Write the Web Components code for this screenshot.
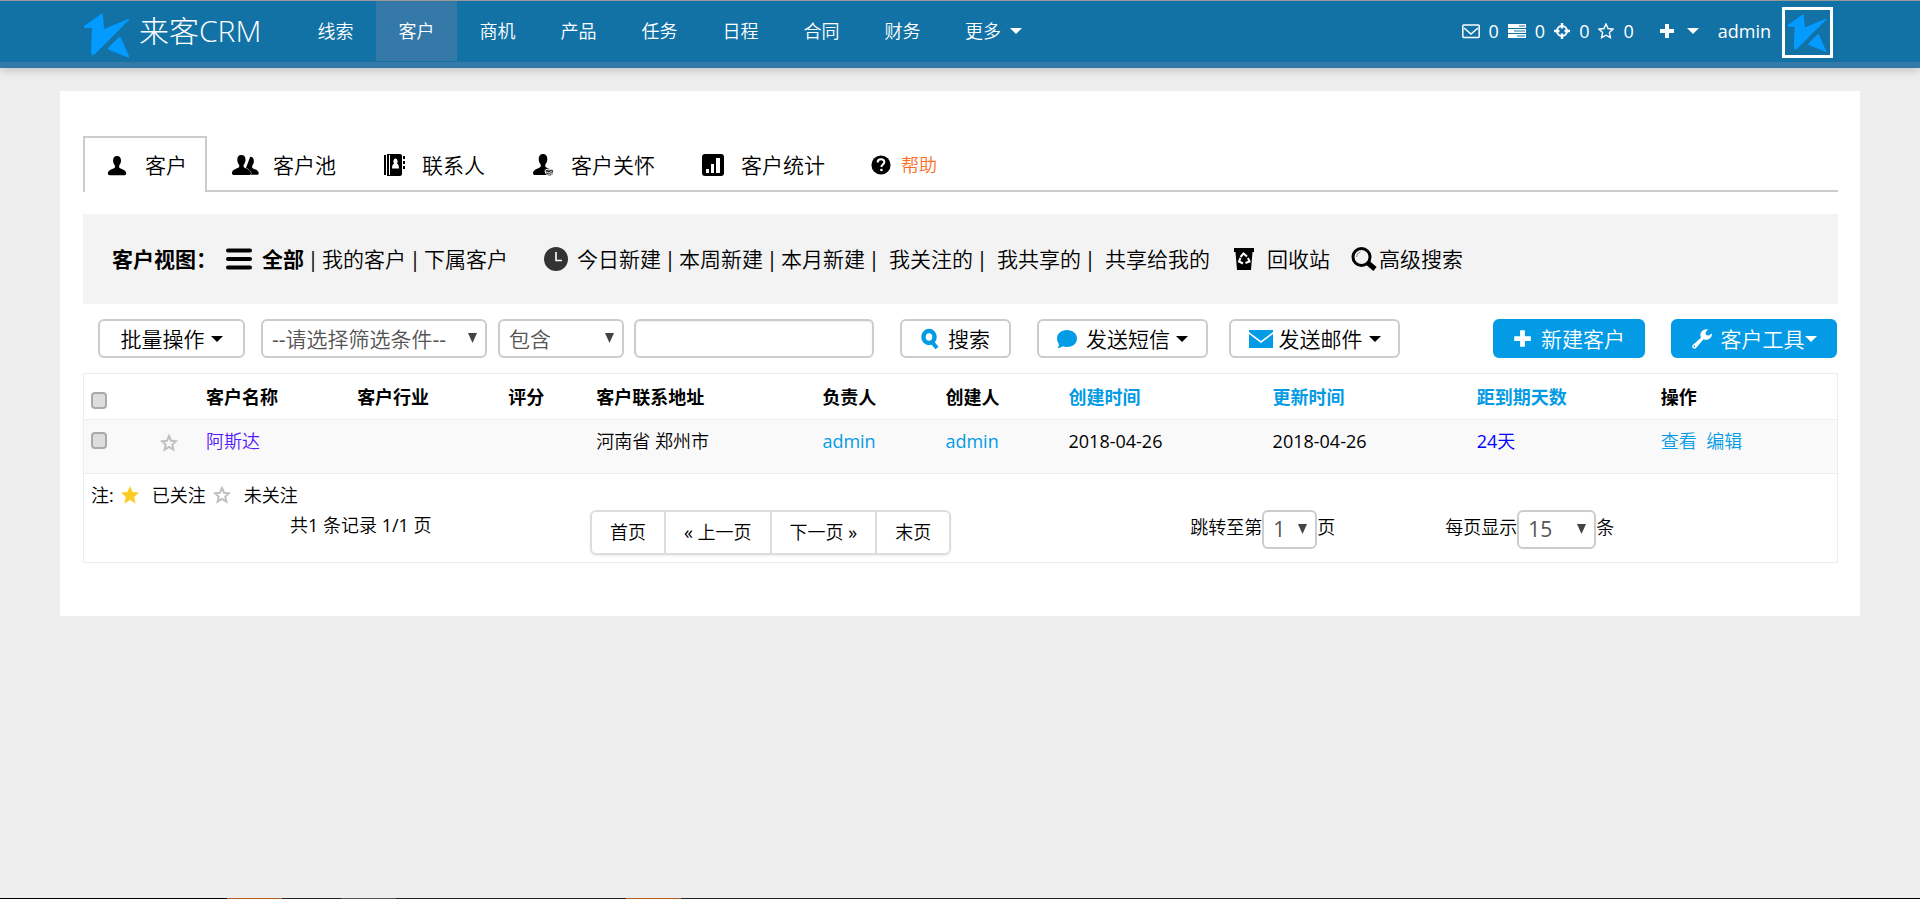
<!DOCTYPE html>
<html lang="zh-CN">
<head>
<meta charset="utf-8">
<title>来客CRM - 客户</title>
<style>
html { --strong-font: "Open Sans", "Noto Sans CJK SC", sans-serif; font-family: "Open Sans", "Noto Sans CJK SC DemiLight", "Noto Sans CJK SC", sans-serif; font-size: 18px; line-height: 24px; color: #000; background: #eee; }
body { margin: 0; }
</style>
</head>
<body>
<crm-app></crm-app>
<script>
const define = (name, html, setup) => {
  const template = document.createElement('template');
  template.innerHTML = '<style>*{box-sizing:border-box}a{color:inherit;text-decoration:none}button,input,select{font:inherit;color:inherit;margin:0}</style>' + html;
  customElements.define(name, class extends HTMLElement {
    constructor() {
      super();
      this.attachShadow({ mode: 'open' }).append(template.content.cloneNode(true));
    }
    connectedCallback() { if (setup) setup(this, this.shadowRoot); }
  });
};

const person = '<path d="M12 1c3 0 4.300 2 4.300 5 0 2.500-.9 4.300-2 5.500v2.200c1 1.600 7.700 2.300 7.700 6.500 0 1.200-.8 1.800-2 1.800H4c-1.200 0-2-.6-2-1.800 0-4.200 6.700-4.900 7.700-6.500v-2.200c-1.100-1.200-2-3-2-5.500 0-3 1.300-5 4.300-5z"/>';
const mark = '<path fill="#039bff" d="M1 13 18 1q2-1 2 1l1 14L45 6q3-1 1 1L12 41q-4 3-4-2L9 15H2q-2-1-1-2zM35 25q2-2 3 0l8 18q1 3-2 1L26 37q-2-1-1-2z"/>';
const ICONS = {
  logo: ['0 0 48 46', mark],
  caret: ['0 0 12 6', '<path d="M0 0h12L6 6z"/>'],
  mail: ['0 0 18 16', '<rect x=".8" y="2" width="16.400" height="12.500" rx="1" fill="none" stroke="currentColor" stroke-width="1.500"/><path d="m2 5 7 6 7-6" fill="none" stroke="currentColor" stroke-width="1.500"/>'],
  tasks: ['0 0 18 16', '<path fill-rule="evenodd" d="M0 1h18v4H0zm11 1.500v1h6v-1zM0 6h18v4H0zm6 1.500v1h11v-1zM0 11h18v4H0zm9 1.500v1h8v-1z"/>'],
  target: ['0 0 16 16', '<circle cx="8" cy="8" r="5" fill="none" stroke="currentColor" stroke-width="2"/><path d="M6.800 0h2.400v5.500H6.800zM6.800 10.500h2.400V16H6.800zM0 6.800h5.500v2.400H0zM10.500 6.800H16v2.400h-5.500z"/>'],
  starline: ['0 0 16 16', '<path d="m8 1 2.100 4.500 5 .7-3.700 3.400 1 5L8 12.200l-4.400 2.400 1-5L.9 6.200l5-.7z" fill="none" stroke="currentColor" stroke-width="1.400"/>'],
  plus: ['0 0 16 16', '<path d="M6 1h4v5h5v4h-5v5H6v-5H1V6h5z"/>'],
  user: ['0 0 24 24', '<g transform="translate(1 2) scale(.92)">' + person + '</g>'],
  users: ['0 0 28 24', '<path transform="translate(9 3) scale(.85)" d="M12 1c3 0 4.300 2 4.300 5 0 2.500-.9 4.300-2 5.500v2.200c1 1.600 7.700 2.300 7.700 6.500 0 1.200-.8 1.800-2 1.800H4z"/><g stroke="#fff" stroke-width="1" paint-order="stroke" transform="translate(-1 1) scale(.95)">' + person + '</g>'],
  book: ['0 0 24 24', '<path fill-rule="evenodd" d="M2 2h2v20H2zM5 1h13q2 0 2 2v18q0 2-2 2H5zm2 1v20h1V2zm6.500 3.500a2.500 3 0 0 0-1.500 5q-2 1-2 5h7q0-4-2-5a2.500 3 0 0 0-1.500-5zM21 3h2v3h-2zM21 8h2v3h-2zM21 13h2v3h-2z"/>'],
  care: ['0 0 24 24', person + '<path d="M14 17.500q2-2.500 4-.5 2-2 4.500 0 1 3-3 6h-2q-4-3-3.500-5.500z" fill="#333" stroke="#fff"/><path d="m15 19 3 1 3-2M17 22l4-2" fill="none" stroke="#fff" stroke-width=".8"/>'],
  chart: ['0 0 24 24', '<rect x="1" y="1" width="22" height="22" rx="3"/><path fill="#fff" d="M5 16h3v4H5zM10 11h3v9h-3zM15 5h4v15h-4z"/>'],
  help: ['0 0 24 24', '<circle cx="12" cy="12" r="11.500"/><path d="M8 9q0-4 4-4t4 3.500c0 3-3.500 3-3.500 6" fill="none" stroke="#fff" stroke-width="2.400"/><circle cx="12.500" cy="18" r="1.600" fill="#fff"/>'],
  menu: ['0 0 26 22', '<path d="M2 2.500h22M2 11h22M2 19.500h22" stroke="currentColor" stroke-width="4" stroke-linecap="round"/>'],
  clock: ['0 0 24 24', '<circle cx="12" cy="12" r="12" fill="#333"/><path d="M12 5v8.500h6" fill="none" stroke="#fff" stroke-width="1.600"/>'],
  trash: ['0 0 20 24', '<path d="M0 1h20v4h-1.500L17 23H3L1.500 5H0z"/><path d="m6.500 10 3-3.500 3.500 3M14 11l1.500 3.500-4 1.500M9 16.500l-4-2 1.500-3.500" fill="none" stroke="#fff" stroke-width="2"/>'],
  search: ['0 0 26 24', '<circle cx="10.500" cy="10" r="8.500" fill="none" stroke="currentColor" stroke-width="3"/><path d="m17 16 7 6" stroke="currentColor" stroke-width="5"/><path d="M5.500 10q0-4 4-5" fill="none" stroke="#888"/>'],
  find: ['0 0 18 22', '<ellipse cx="8" cy="9" rx="5.500" ry="6" fill="none" stroke="#039be5" stroke-width="4.500"/><path d="m11 14 5 6" stroke="#039be5" stroke-width="4"/>'],
  bubble: ['0 0 20 20', '<path fill="#039be5" d="M10 1c5.500 0 10 3.500 10 8.500S15.500 18 10 18c-1.500 0-3-.3-4-.8Q4 19 .5 19q2-2 1.300-4Q0 12.500 0 9.500C0 4.500 4.500 1 10 1z"/>'],
  envelope: ['0 0 24 20', '<path fill="#039be5" d="M0 1h24v2L12 12 0 3zM0 5l12 9 12-9v14H0z"/>'],
  wrench: ['0 0 20 20', '<path fill-rule="evenodd" d="M20 4.500a6 6 0 0 1-8.500 5.800L4 19q-1.500 1.500-3.200 0-1.400-1.700.2-3.200l8-7A6 6 0 0 1 16 .4l-2.500 3 .5 2.600 2.600.4zM3 16.500a.9.9 0 1 0 0 1.600z"/>'],
  star: ['0 0 18 18', '<path fill="none" stroke="#c0c0c0" stroke-width="2" d="m9 2 2.100 4.700 5 .5-3.800 3.400 1.100 5L9 13l-4.400 2.600 1.100-5L2 7.200l5-.5z"/>'],
  gold: ['0 0 18 18', '<path fill="#fdcb24" d="m9 0 2.600 6 6.400.6-4.800 4.300 1.400 6.500L9 14.100l-5.600 3.300 1.400-6.500L0 6.600 6.400 6z"/>'],
};

define('crm-icon', '<style>:host{display:inline-flex;flex:none}svg{display:block;fill:currentColor}</style><svg aria-hidden="true"></svg>', (host, root) => {
  const [box, shapes] = ICONS[host.getAttribute('name')];
  const [, , w, h] = box.split(' ');
  const svg = root.querySelector('svg');
  const scale = (host.getAttribute('size') || h) / h;
  svg.setAttribute('viewBox', box);
  svg.setAttribute('width', w * scale);
  svg.setAttribute('height', h * scale);
  svg.innerHTML = shapes;
});

define('nav-item', `
<style>
:host{display:block}
a{display:flex;align-items:center;justify-content:center;gap:9px;height:60px;min-width:81px;padding:0 22px;color:#fff;white-space:nowrap}
:host([active]) a{background:#3479a8}
</style>
<a href="#"><slot></slot></a>`);

define('crm-navbar', `
<style>
:host{display:block;background:#1272a5;border-top:1px solid #999;border-bottom:6px solid #3479a8;box-shadow:0 2px 10px rgba(0,0,0,.2);color:#fff}
.bar{display:flex;height:61px;padding:0 87px 0 83px}
.brand{display:flex;gap:8px;padding-top:12px;font-family:var(--strong-font);font-size:30px;font-weight:300;line-height:36px;width:212px;white-space:nowrap}
nav{display:flex;flex:1}
.status{display:flex;align-items:center;height:60px;gap:9px}
.status a{display:flex;align-items:center;gap:9px}
.add{margin-left:16px}
.status .add{gap:12px}
.me{margin-left:10px}
.avatar{display:block;width:51px;height:51px;border:3px solid #fff;margin:6px 0 0 11px;padding:4px 0 0 2px}
</style>
<div class="bar">
 <a class="brand" href="#"><crm-icon name="logo"></crm-icon>来客CRM</a>
 <nav>
  <nav-item>线索</nav-item><nav-item active>客户</nav-item><nav-item>商机</nav-item><nav-item>产品</nav-item><nav-item>任务</nav-item><nav-item>日程</nav-item><nav-item>合同</nav-item><nav-item>财务</nav-item><nav-item>更多<crm-icon name="caret"></crm-icon></nav-item>
 </nav>
 <div class="status">
  <a href="#"><crm-icon name="mail"></crm-icon>0</a>
  <a href="#"><crm-icon name="tasks"></crm-icon>0</a>
  <a href="#"><crm-icon name="target"></crm-icon>0</a>
  <a href="#"><crm-icon name="starline"></crm-icon>0</a>
  <a class="add" href="#" aria-label="新建"><crm-icon name="plus"></crm-icon><crm-icon name="caret"></crm-icon></a>
  <a class="me" href="#">admin</a>
 </div>
 <a class="avatar" href="#" aria-label="admin"><crm-icon name="logo" size="39"></crm-icon></a>
</div>`);

define('crm-tab', `
<style>
:host{display:block}
a{display:flex;align-items:center;height:56px;padding:0 18px;border:2px solid transparent;border-bottom:0;font-size:21px;white-space:nowrap}
.icon{display:flex;justify-content:center;width:28px;margin-right:14px}
:host([active]) a{border-color:#ccc;background:#fff}
:host([help]) a{font-size:18px;color:#ff6c1e}
:host([help]) .icon{width:24px;margin-right:8px;color:#000}
</style>
<a href="#"><span class="icon"><slot name="icon"></slot></span><slot></slot></a>`);

define('crm-tabs', `
<style>
:host{display:flex;gap:4px;background:linear-gradient(#ccc,#ccc) 0 100%/100% 2px no-repeat}
</style><slot></slot>`);

define('filter-bar', `
<style>
:host{display:flex;flex-wrap:wrap;align-items:center;min-height:90px;padding:0 29px;background:#f3f3f3;font-size:21px;white-space:nowrap}
a,strong{display:flex;align-items:center}
strong,.on{font-family:var(--strong-font);font-weight:700}
.group{display:flex;gap:6px;margin-right:36px}
.group i{display:flex;justify-content:center;font-style:normal;width:6px}
.wide{margin-left:6px}
crm-icon{margin-right:9px}
strong{margin-right:9px}
.list{margin-right:10px}
.last{margin-right:24px}
.trash{margin-right:13px}
.find{margin:0 2px 0 21px}
</style>
<strong>客户视图：</strong>
<crm-icon class="list" name="menu"></crm-icon>
<div class="group"><a class="on" href="#">全部</a><i>|</i><a href="#">我的客户</a><i>|</i><a href="#">下属客户</a></div>
<crm-icon name="clock"></crm-icon>
<div class="group last"><a href="#">今日新建</a><i>|</i><a href="#">本周新建</a><i>|</i><a href="#">本月新建</a><i>|</i><a class="wide" href="#">我关注的</a><i>|</i><a class="wide" href="#">我共享的</a><i>|</i><a class="wide" href="#">共享给我的</a></div>
<crm-icon class="trash" name="trash"></crm-icon><a href="#">回收站</a>
<crm-icon class="find" name="search"></crm-icon><a href="#">高级搜索</a>`);

define('crm-button', `
<style>
:host{display:block}
button{display:flex;align-items:center;justify-content:center;gap:6px;width:100%;height:39px;padding:0 8px;border:2px solid #ccc;border-radius:6px;background:#fff;font-size:21px;white-space:nowrap}
:host([primary]) button{background:#039be5;border-color:#039be5;color:#fff}
</style>
<button type="button"><slot></slot></button>`);

define('crm-select', `
<style>
:host{display:block;position:relative}
select{display:block;width:100%;height:39px;padding:0 9px;border:2px solid #ccc;border-radius:6px;background:#fff;appearance:none;font-size:21px;color:#555}
svg{position:absolute;right:10px;top:14px;fill:#444;pointer-events:none}
</style>
<select></select><svg width="9" height="10" viewBox="0 0 9 10" aria-hidden="true"><path d="M0 0h9L4.500 10z"/></svg>`, (host, root) => {
  const select = root.querySelector('select');
  select.setAttribute('aria-label', host.getAttribute('label'));
  select.add(new Option(host.getAttribute('value')));
});

define('tool-bar', `
<style>
:host{display:flex;flex-wrap:wrap;align-items:center;padding:15px 1px 15px 15px;white-space:nowrap}
.batch{width:147px;margin-right:16px}
.field{width:226px;margin-right:11px}
.match{width:126px;margin-right:10px}
input{width:240px;height:39px;margin-right:26px;padding:0 9px;border:2px solid #ccc;border-radius:6px;background:#fff;box-shadow:inset 0 1px 2px #eee;font-size:21px}
.find{width:111px;margin-right:26px}
.sms{width:171px;margin-right:21px}
.mail{width:171px}
.new{width:152px;margin:0 26px 0 auto}
.tools{width:166px}
.roomy{margin-right:3px}
.tight{margin-left:-6px}
</style>
<crm-button class="batch">批量操作<crm-icon name="caret"></crm-icon></crm-button>
<crm-select class="field" label="筛选条件" value="--请选择筛选条件--"></crm-select>
<crm-select class="match" label="匹配方式" value="包含"></crm-select>
<input type="text" aria-label="搜索内容">
<crm-button class="find"><crm-icon class="roomy" name="find"></crm-icon>搜索</crm-button>
<crm-button class="sms"><crm-icon class="roomy" name="bubble"></crm-icon>发送短信<crm-icon name="caret"></crm-icon></crm-button>
<crm-button class="mail"><crm-icon name="envelope"></crm-icon>发送邮件<crm-icon name="caret"></crm-icon></crm-button>
<crm-button class="new" primary><crm-icon class="roomy" name="plus" size="19"></crm-icon>新建客户</crm-button>
<crm-button class="tools" primary><crm-icon class="roomy" name="wrench"></crm-icon>客户工具<crm-icon class="tight" name="caret"></crm-icon></crm-button>`);

define('crm-pager', `
<style>
:host{display:flex;border:2px solid #ddd;border-radius:6px;box-shadow:0 1px 2px rgba(0,0,0,.08);white-space:nowrap}
a{display:block;padding:0 18px;line-height:41px}
a+a{border-left:2px solid #ddd}
</style>
<a href="#">首页</a><a href="#">« 上一页</a><a href="#">下一页 »</a><a href="#">末页</a>`);

define('customer-table', `
<style>
:host{display:block;border:1px solid #e8efef}
table{width:100%;border-collapse:collapse;table-layout:fixed}
th,td{padding:11px 7px 0;text-align:left;vertical-align:top;line-height:24px;white-space:nowrap}
th{height:45px;font-family:var(--strong-font);font-weight:700}
td{height:54px;padding-top:9px;background:#f9f9f9;border:solid #e8efef;border-width:1px 0}
input{display:block;appearance:none;width:16px;height:17px;margin-top:7px;border:2px solid #aaa;border-radius:4px;background:#ddd}
td input{margin-top:3px}
td crm-icon{display:block;margin-top:5px}
.blue{color:#039be5}
.visited{color:#551aff}
.days{color:#00f}
.notes{display:flex;align-items:center;gap:13px;padding:9px 7px 0}
.notes crm-icon{margin-left:-6px}
.foot{display:flex;align-items:flex-start;padding:3px 0 7px 206px;white-space:nowrap}
.count{width:300px;padding-top:3px}
.jump{display:flex;line-height:34px}
.to{margin-left:239px}
.per{margin-left:110px}
.page{width:55px}
.size{width:79px}
</style>
<table>
 <colgroup><col style="width:69px"><col style="width:46px"><col style="width:151px"><col style="width:151px"><col style="width:88px"><col style="width:226px"><col style="width:123px"><col style="width:123px"><col style="width:204px"><col style="width:204px"><col style="width:184px"><col style="width:183px"></colgroup>
 <thead><tr><th><input type="checkbox" aria-label="全选"></th><th></th><th>客户名称</th><th>客户行业</th><th>评分</th><th>客户联系地址</th><th>负责人</th><th>创建人</th><th><a class="blue" href="#">创建时间</a></th><th><a class="blue" href="#">更新时间</a></th><th><a class="blue" href="#">距到期天数</a></th><th>操作</th></tr></thead>
 <tbody><tr><td><input type="checkbox" aria-label="选择阿斯达"></td><td><crm-icon name="star"></crm-icon></td><td><a class="visited" href="#">阿斯达</a></td><td></td><td></td><td>河南省 郑州市</td><td><a class="blue" href="#">admin</a></td><td><a class="blue" href="#">admin</a></td><td>2018-04-26</td><td>2018-04-26</td><td class="days">24天</td><td class="blue"><a href="#">查看</a>&nbsp; <a href="#">编辑</a></td></tr></tbody>
</table>
<div class="notes">注: <crm-icon name="gold"></crm-icon>已关注<crm-icon name="star"></crm-icon>未关注</div>
<div class="foot">
 <span class="count">共1 条记录 1/1 页</span>
 <crm-pager></crm-pager>
 <span class="jump to">跳转至第<crm-select class="page" label="页码" value="1"></crm-select>页</span>
 <span class="jump per">每页显示<crm-select class="size" label="每页条数" value="15"></crm-select>条</span>
</div>`);

define('crm-app', `
<style>
:host{display:flex;flex-direction:column;min-height:100vh}
main{margin:23px 60px 0;padding:45px 22px 53px 23px;background:#fff}
filter-bar{margin-top:22px}
footer{height:1px;margin-top:auto;background:linear-gradient(90deg,#000 227px,#b5622a 227px 282px,#222 282px 341px,#555 341px 396px,#222 396px 626px,#b5622a 626px 681px,#222 681px 1840px,#000 1840px)}
</style>
<crm-navbar></crm-navbar>
<main>
 <crm-tabs>
  <crm-tab active><crm-icon slot="icon" name="user"></crm-icon>客户</crm-tab>
  <crm-tab><crm-icon slot="icon" name="users"></crm-icon>客户池</crm-tab>
  <crm-tab><crm-icon slot="icon" name="book"></crm-icon>联系人</crm-tab>
  <crm-tab><crm-icon slot="icon" name="care"></crm-icon>客户关怀</crm-tab>
  <crm-tab><crm-icon slot="icon" name="chart"></crm-icon>客户统计</crm-tab>
  <crm-tab help><crm-icon slot="icon" name="help" size="20"></crm-icon>帮助</crm-tab>
 </crm-tabs>
 <filter-bar></filter-bar>
 <tool-bar></tool-bar>
 <customer-table></customer-table>
</main>
<footer></footer>`);
</script>
</body>
</html>
